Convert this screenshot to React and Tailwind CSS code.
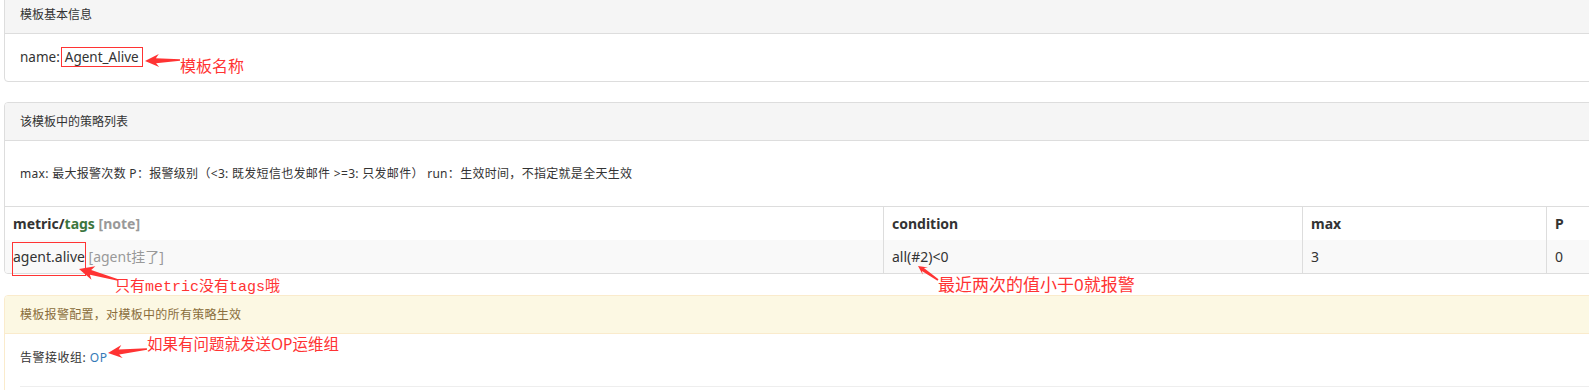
import React from "react";

// arrow polygon: tip at (tx,ty), tail end at (ex,ey)
function arrowPoints(tx, ty, ex, ey, head = 14, half = 6.5, neck = 2.5) {
  const dx = ex - tx;
  const dy = ey - ty;
  const L = Math.hypot(dx, dy);
  const ux = dx / L;
  const uy = dy / L;
  const nx = -uy;
  const ny = ux;
  const p = (a, b) =>
    `${(tx + ux * a + nx * b).toFixed(1)},${(ty + uy * a + ny * b).toFixed(1)}`;
  return [
    p(0, 0),
    p(head, half),
    p(head - 3, neck),
    p(L, 0.8),
    p(L, -0.8),
    p(head - 3, -neck),
    p(head, -half),
  ].join(" ");
}

const arrows = [
  { t: [145, 61], e: [180, 60], head: 14, half: 6.5 },
  { t: [79, 269], e: [118, 280], head: 15, half: 7 },
  { t: [918, 266], e: [938, 280], head: 9, half: 4.5, neck: 1.8 },
  { t: [108, 353], e: [147, 349], head: 14, half: 6.5 },
];

export default function App() {
  return (
    <div className="relative h-[390px] w-full overflow-hidden bg-white pl-[4px] text-[#333] font-[family-name:'Noto_Sans','Noto_Sans_CJK_SC',sans-serif]">
      {/* 模板基本信息 */}
      <div className="-mt-[5px] mb-[20px] mr-[-20px] rounded-[4px] border border-[#ddd] bg-white">
        <div className="rounded-t-[3px] border-b border-[#ddd] bg-[#f5f5f5] px-[15px] py-[10px] text-[12px] leading-[17px]">
          模板基本信息
        </div>
        <div className="px-[15px] py-[15px] text-[13.5px] leading-[17px]">
          name:
          <span className="ml-[1px] border border-[#f33] px-[3px]">Agent_Alive</span>
        </div>
      </div>

      {/* 策略列表 */}
      <div className="mb-[21px] mr-[-20px] overflow-hidden rounded-[4px] border border-[#ddd] bg-white">
        <div className="border-b border-[#ddd] bg-[#f5f5f5] px-[15px] py-[10px] text-[12px] leading-[17px]">
          该模板中的策略列表
        </div>
        <div className="px-[15px] py-[23px] text-[12px] leading-[19px] tracking-[0.3px]">
          max: 最大报警次数 P：报警级别（&lt;3: 既发短信也发邮件 &gt;=3: 只发邮件） run：生效时间，不指定就是全天生效
        </div>
        <div className="grid grid-cols-[878px_419px_244px_1fr] border-t border-[#ddd] text-[14px] leading-[17px]">
          <div className="px-[8px] py-[8px] font-bold">
            metric/<span className="text-[#3c763d]">tags</span>{" "}
            <span className="text-[#999]">[note]</span>
          </div>
          <div className="border-l border-[#ddd] px-[8px] py-[8px] font-bold">condition</div>
          <div className="border-l border-[#ddd] px-[8px] py-[8px] font-bold">max</div>
          <div className="border-l border-[#ddd] px-[8px] py-[8px] font-bold">P</div>

          <div className="bg-[#f9f9f9] px-[8px] py-[8px]">
            agent.alive <span className="text-[#999]">[agent挂了]</span>
          </div>
          <div className="border-l border-[#ddd] bg-[#f9f9f9] px-[8px] py-[8px]">all(#2)&lt;0</div>
          <div className="border-l border-[#ddd] bg-[#f9f9f9] px-[8px] py-[8px]">3</div>
          <div className="border-l border-[#ddd] bg-[#f9f9f9] px-[8px] py-[8px]">0</div>
        </div>
      </div>

      {/* 报警配置 */}
      <div className="mr-[-20px] rounded-[4px] border border-[#faebcc] bg-white">
        <div className="rounded-t-[3px] border-b border-[#faebcc] bg-[#fcf8e3] px-[15px] py-[10px] text-[12px] leading-[17px] tracking-[0.3px] text-[#8a6d3b]">
          模板报警配置，对模板中的所有策略生效
        </div>
        <div className="px-[15px] pt-[15px] pb-[15px]">
          <div className="text-[12px] leading-[17px] tracking-[0.5px]">
            告警接收组: <span className="text-[#337ab7]">OP</span>
          </div>
          <hr className="mt-[20px] border-0 border-t border-[#eee]" />
        </div>
      </div>

      {/* annotations */}
      <div className="pointer-events-none absolute left-[12px] top-[242px] h-[34px] w-[74px] border border-[#f33]" />

      <svg className="pointer-events-none absolute left-0 top-0" width="1589" height="390">
        {arrows.map((a, i) => (
          <polygon
            key={i}
            points={arrowPoints(a.t[0], a.t[1], a.e[0], a.e[1], a.head, a.half, a.neck)}
            fill="#f33"
          />
        ))}
      </svg>

      <div className="pointer-events-none absolute left-[180px] top-[58px] text-[16px] leading-[16px] text-[#f33]">
        模板名称
      </div>
      <div className="pointer-events-none absolute left-[115px] top-[277px] text-[15px] leading-[16px] text-[#f33]">
        只有<span className="font-[family-name:'Liberation_Mono',monospace]">metric</span>没有
        <span className="font-[family-name:'Liberation_Mono',monospace]">tags</span>哦
      </div>
      <div className="pointer-events-none absolute left-[938px] top-[276px] text-[17px] leading-[17px] text-[#f33]">
        最近两次的值小于0就报警
      </div>
      <div className="pointer-events-none absolute left-[147px] top-[336px] text-[15.5px] leading-[16px] text-[#f33]">
        如果有问题就发送OP运维组
      </div>
    </div>
  );
}
